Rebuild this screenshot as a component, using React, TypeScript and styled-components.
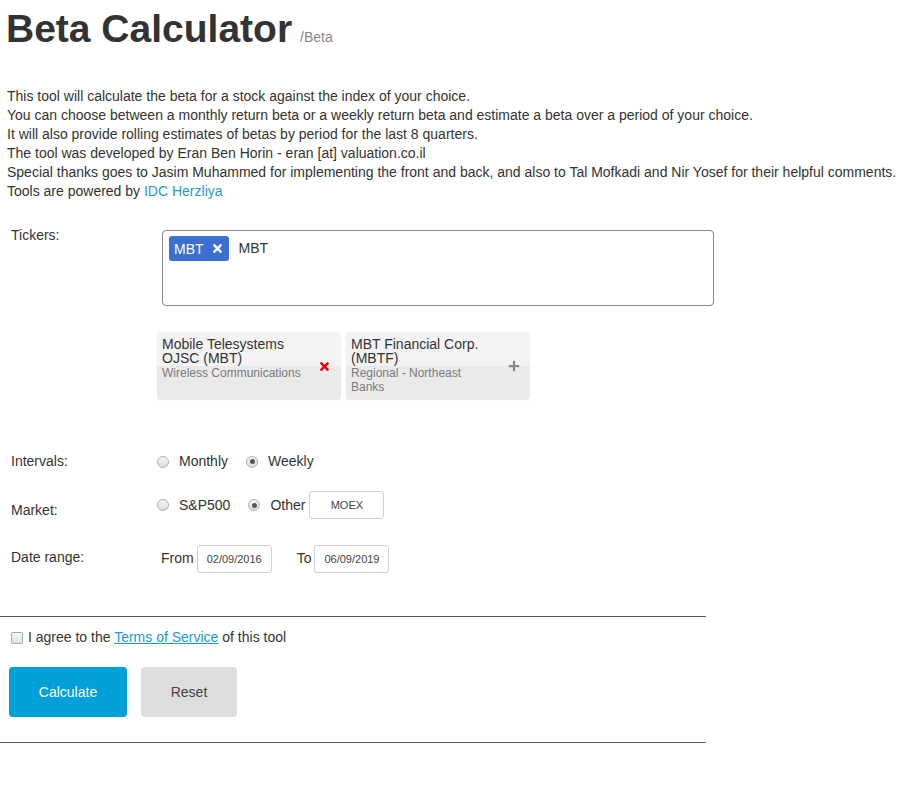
import styled, { createGlobalStyle } from "styled-components";
import { FaTimes, FaPlus } from "react-icons/fa";

const GlobalStyle = createGlobalStyle`
  body {
    margin: 0;
    background: #fff;
    color: #333;
    font-family: "Liberation Sans", Arial, sans-serif;
    font-size: 14px;
  }
`;

const suggestions = [
  {
    name: "Mobile Telesystems OJSC (MBT)",
    sector: "Wireless Communications",
    selected: true,
  },
  {
    name: "MBT Financial Corp. (MBTF)",
    sector: "Regional - Northeast Banks",
    selected: false,
  },
];

const intro = [
  "This tool will calculate the beta for a stock against the index of your choice.",
  "You can choose between a monthly return beta or a weekly return beta and estimate a beta over a period of your choice.",
  "It will also provide rolling estimates of betas by period for the last 8 quarters.",
  "The tool was developed by Eran Ben Horin - eran [at] valuation.co.il",
  "Special thanks goes to Jasim Muhammed for implementing the front and back, and also to Tal Mofkadi and Nir Yosef for their helpful comments.",
];

const App = () => {
  return (
    <Page>
      <GlobalStyle />
      <Title>
        Beta Calculator<SubTitle>/Beta</SubTitle>
      </Title>

      <Intro>
        {intro.map((line) => (
          <div key={line}>{line}</div>
        ))}
        <div>
          Tools are powered by <Link href="#">IDC Herzliya</Link>
        </div>
      </Intro>

      <Form>
        <Row $gap={25}>
          <Label>Tickers:</Label>
          <Controls $column>
            <TickerBox>
              <Tag>
                MBT
                <FaTimes size={13} />
              </Tag>
              <TickerText>MBT</TickerText>
            </TickerBox>
            <Cards>
              {suggestions.map((s) => (
                <Card key={s.name}>
                  <CardText>
                    <CardTitle>{s.name}</CardTitle>
                    <CardSub>{s.sector}</CardSub>
                  </CardText>
                  <CardIcon $selected={s.selected}>
                    {s.selected ? <FaTimes size={13} /> : <FaPlus size={12} />}
                  </CardIcon>
                </Card>
              ))}
            </Cards>
          </Controls>
        </Row>

        <Row $gap={52}>
          <Label>Intervals:</Label>
          <Controls $height={19}>
            <Option>
              <Radio type="radio" name="interval" />
              Monthly
            </Option>
            <Option>
              <Radio type="radio" name="interval" defaultChecked />
              Weekly
            </Option>
          </Controls>
        </Row>

        <Row $gap={20}>
          <Label $offset={10}>Market:</Label>
          <Controls $height={28}>
            <Option>
              <Radio type="radio" name="market" />
              S&amp;P500
            </Option>
            <Option>
              <Radio type="radio" name="market" defaultChecked />
              Other
              <SmallInput defaultValue="MOEX" $left={4} />
            </Option>
          </Controls>
        </Row>

        <Row $gap={25}>
          <Label $offset={3}>Date range:</Label>
          <Controls $height={28}>
            <DateLabel $left={4}>From</DateLabel>
            <SmallInput defaultValue="02/09/2016" $left={3} />
            <DateLabel $left={25}>To</DateLabel>
            <SmallInput defaultValue="06/09/2019" $left={3} />
          </Controls>
        </Row>
      </Form>

      <Divider $gap={43} />
      <Agree>
        <Check type="checkbox" />
        <span>
          I agree to the <TermsLink href="#">Terms of Service</TermsLink> of
          this tool
        </span>
      </Agree>
      <Buttons>
        <Button $primary $width={118}>
          Calculate
        </Button>
        <Button $width={96}>Reset</Button>
      </Buttons>
      <Divider $gap={25} />
    </Page>
  );
};

export default App;

const Page = styled.div`
  padding-top: 8px;
`;

const Title = styled.h1`
  margin: 0;
  padding-left: 6px;
  font-size: 39px;
  line-height: 42px;
  font-weight: bold;
  color: #333;
`;

const SubTitle = styled.span`
  margin-left: 8px;
  font-size: 14px;
  line-height: 14px;
  font-weight: normal;
  color: #888;
`;

const Intro = styled.div`
  margin-top: 37px;
  padding-left: 7px;
  line-height: 19px;
  white-space: nowrap;
`;

const Link = styled.a`
  color: #1a9bd7;
  text-decoration: none;
`;

const Form = styled.div`
  padding-left: 11px;
`;

const Row = styled.div<{ $gap: number }>`
  display: flex;
  align-items: flex-start;
  margin-top: ${(p) => p.$gap}px;
`;

const Label = styled.div<{ $offset?: number }>`
  width: 146px;
  flex-shrink: 0;
  line-height: 19px;
  padding-top: ${(p) => p.$offset ?? 0}px;
`;

const Controls = styled.div<{ $column?: boolean; $height?: number }>`
  display: flex;
  flex-direction: ${(p) => (p.$column ? "column" : "row")};
  align-items: ${(p) => (p.$column ? "flex-start" : "center")};
  height: ${(p) => (p.$height ? `${p.$height}px` : "auto")};
`;

const TickerBox = styled.div`
  box-sizing: border-box;
  display: flex;
  align-items: flex-start;
  gap: 10px;
  width: 552px;
  height: 76px;
  margin: 4px 0 0 5px;
  padding: 5px 6px;
  border: 1px solid #8a8a8a;
  border-radius: 4px;
`;

const Tag = styled.span`
  display: inline-flex;
  align-items: center;
  gap: 7px;
  height: 25px;
  padding: 0 5px 0 5px;
  background: #3b6fd3;
  border-radius: 3px;
  color: #fff;
  font-size: 14px;
`;

const TickerText = styled.span`
  line-height: 25px;
`;

const Cards = styled.div`
  display: flex;
  gap: 5px;
  margin-top: 26px;
`;

const Card = styled.div`
  box-sizing: border-box;
  display: flex;
  align-items: center;
  width: 184px;
  height: 68px;
  padding: 0 10px 0 5px;
  border-radius: 4px;
  background: linear-gradient(to bottom, #f3f3f3 50%, #eaeaea 50%);
  box-shadow: 0 0 1px rgba(0, 0, 0, 0.12);
`;

const CardText = styled.div`
  align-self: flex-start;
  width: 142px;
  padding-top: 5px;
`;

const CardTitle = styled.div`
  font-size: 14px;
  line-height: 14px;
  color: #333;
`;

const CardSub = styled.div`
  margin-top: 1px;
  font-size: 12px;
  line-height: 14px;
  color: #7a7a7a;
`;

const CardIcon = styled.span<{ $selected: boolean }>`
  display: flex;
  margin-left: auto;
  color: ${(p) => (p.$selected ? "#e60000" : "#888")};
`;

const Option = styled.label`
  display: inline-flex;
  align-items: center;
  margin-right: 18px;
  line-height: 19px;
`;

const Radio = styled.input`
  appearance: none;
  box-sizing: border-box;
  width: 12px;
  height: 12px;
  margin: 0 10px 0 0;
  border: 1px solid #b0b0b0;
  border-radius: 50%;
  background: linear-gradient(to bottom, #f6f6f6, #dcdcdc);
  display: grid;
  place-items: center;

  &:checked::after {
    content: "";
    width: 5px;
    height: 5px;
    border-radius: 50%;
    background: #555;
  }
`;

const SmallInput = styled.input<{ $left: number }>`
  box-sizing: border-box;
  width: 75px;
  height: 28px;
  margin-left: ${(p) => p.$left}px;
  border: 1px solid #d0d0d0;
  border-radius: 3px;
  font-family: "Liberation Sans", Arial, sans-serif;
  font-size: 11px;
  color: #444;
  text-align: center;
  outline: none;
`;

const DateLabel = styled.span<{ $left: number }>`
  margin-left: ${(p) => p.$left}px;
  margin-top: -3px;
`;

const Divider = styled.hr<{ $gap: number }>`
  width: 706px;
  margin: ${(p) => p.$gap}px 0 0;
  border: none;
  border-top: 1px solid #555;
`;

const Agree = styled.label`
  display: flex;
  align-items: center;
  margin-top: 11px;
  padding-left: 11px;
  line-height: 19px;
`;

const Check = styled.input`
  appearance: none;
  box-sizing: border-box;
  width: 12px;
  height: 12px;
  margin: 0 5px 0 0;
  border: 1px solid #a8a8a8;
  border-radius: 2px;
  background: linear-gradient(to bottom, #f8f8f8, #e2e2e2);
`;

const TermsLink = styled.a`
  color: #1a9bd7;
  text-decoration: underline;
`;

const Buttons = styled.div`
  display: flex;
  gap: 14px;
  margin-top: 20px;
  padding-left: 9px;
`;

const Button = styled.button<{ $primary?: boolean; $width: number }>`
  width: ${(p) => p.$width}px;
  height: 50px;
  border: none;
  border-radius: 4px;
  background: ${(p) => (p.$primary ? "#00a0db" : "#dddddd")};
  color: ${(p) => (p.$primary ? "#fff" : "#444")};
  font-family: "Liberation Sans", Arial, sans-serif;
  font-size: 14px;
  cursor: pointer;
`;
